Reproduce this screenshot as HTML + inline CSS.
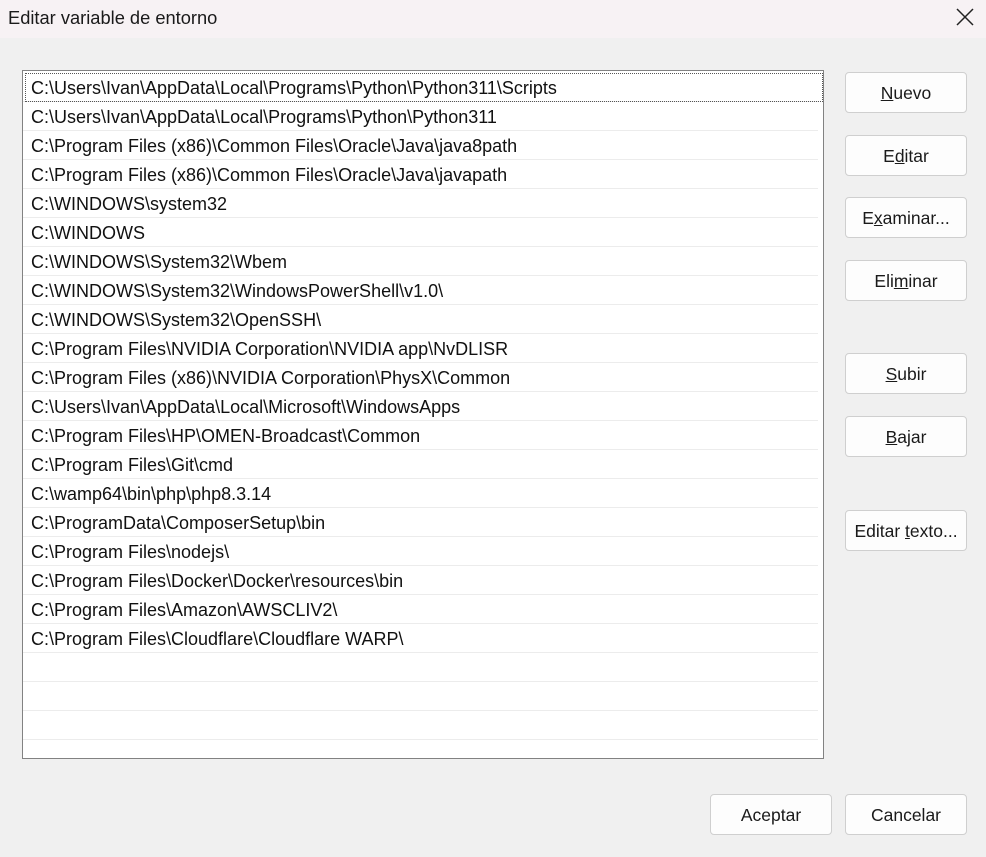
<!DOCTYPE html>
<html><head><meta charset="utf-8"><style>
*{margin:0;padding:0;box-sizing:border-box}
body{width:986px;height:857px;background:#f0f0f0;font-family:"Liberation Sans",sans-serif;position:relative;overflow:hidden;color:#111}
.title{position:absolute;left:0;top:0;width:986px;height:38px;background:#f7f2f4}
.title span{position:absolute;left:8px;top:7px;font-size:18.3px;color:#1a1a1a}
.x{position:absolute;left:955px;top:7px}
.list{position:absolute;left:22px;top:70px;width:802px;height:689px;background:#fff;border:1px solid #828282}
.row{position:absolute;left:0;width:795px;height:29px;border-bottom:1px solid #ececec;font-size:18px;line-height:30px;padding-left:8px;white-space:nowrap}
.focus{position:absolute;left:2px;top:2px;width:798px;height:29px;border:1px dotted #555}
.btn{position:absolute;width:122px;height:41px;background:#fdfdfd;border:1px solid #cfcfcf;border-radius:4px;font-size:17.5px;text-align:center;line-height:41px;color:#1a1a1a}
</style></head><body>
<div class="title"><span>Editar variable de entorno</span>
<svg class="x" width="20" height="20" viewBox="0 0 20 20"><path d="M2 2L18 18M18 2L2 18" stroke="#222" stroke-width="1.5"/></svg></div>
<div class="list">
<div class="row" style="top:2px">C:\Users\Ivan\AppData\Local\Programs\Python\Python311\Scripts</div>
<div class="row" style="top:31px">C:\Users\Ivan\AppData\Local\Programs\Python\Python311</div>
<div class="row" style="top:60px">C:\Program Files (x86)\Common Files\Oracle\Java\java8path</div>
<div class="row" style="top:89px">C:\Program Files (x86)\Common Files\Oracle\Java\javapath</div>
<div class="row" style="top:118px">C:\WINDOWS\system32</div>
<div class="row" style="top:147px">C:\WINDOWS</div>
<div class="row" style="top:176px">C:\WINDOWS\System32\Wbem</div>
<div class="row" style="top:205px">C:\WINDOWS\System32\WindowsPowerShell\v1.0\</div>
<div class="row" style="top:234px">C:\WINDOWS\System32\OpenSSH\</div>
<div class="row" style="top:263px">C:\Program Files\NVIDIA Corporation\NVIDIA app\NvDLISR</div>
<div class="row" style="top:292px">C:\Program Files (x86)\NVIDIA Corporation\PhysX\Common</div>
<div class="row" style="top:321px">C:\Users\Ivan\AppData\Local\Microsoft\WindowsApps</div>
<div class="row" style="top:350px">C:\Program Files\HP\OMEN-Broadcast\Common</div>
<div class="row" style="top:379px">C:\Program Files\Git\cmd</div>
<div class="row" style="top:408px">C:\wamp64\bin\php\php8.3.14</div>
<div class="row" style="top:437px">C:\ProgramData\ComposerSetup\bin</div>
<div class="row" style="top:466px">C:\Program Files\nodejs\</div>
<div class="row" style="top:495px">C:\Program Files\Docker\Docker\resources\bin</div>
<div class="row" style="top:524px">C:\Program Files\Amazon\AWSCLIV2\</div>
<div class="row" style="top:553px">C:\Program Files\Cloudflare\Cloudflare WARP\</div>
<div class="row" style="top:582px"></div>
<div class="row" style="top:611px"></div>
<div class="row" style="top:640px"></div>
<div class="focus"></div>
</div>
<div class="btn" style="left:845px;top:72px"><u>N</u>uevo</div>
<div class="btn" style="left:845px;top:135px">E<u>d</u>itar</div>
<div class="btn" style="left:845px;top:197px">E<u>x</u>aminar...</div>
<div class="btn" style="left:845px;top:260px">Eli<u>m</u>inar</div>
<div class="btn" style="left:845px;top:353px"><u>S</u>ubir</div>
<div class="btn" style="left:845px;top:416px"><u>B</u>ajar</div>
<div class="btn" style="left:845px;top:510px">Editar <u>t</u>exto...</div>
<div class="btn" style="left:710px;top:794px">Aceptar</div>
<div class="btn" style="left:845px;top:794px">Cancelar</div>
</body></html>
